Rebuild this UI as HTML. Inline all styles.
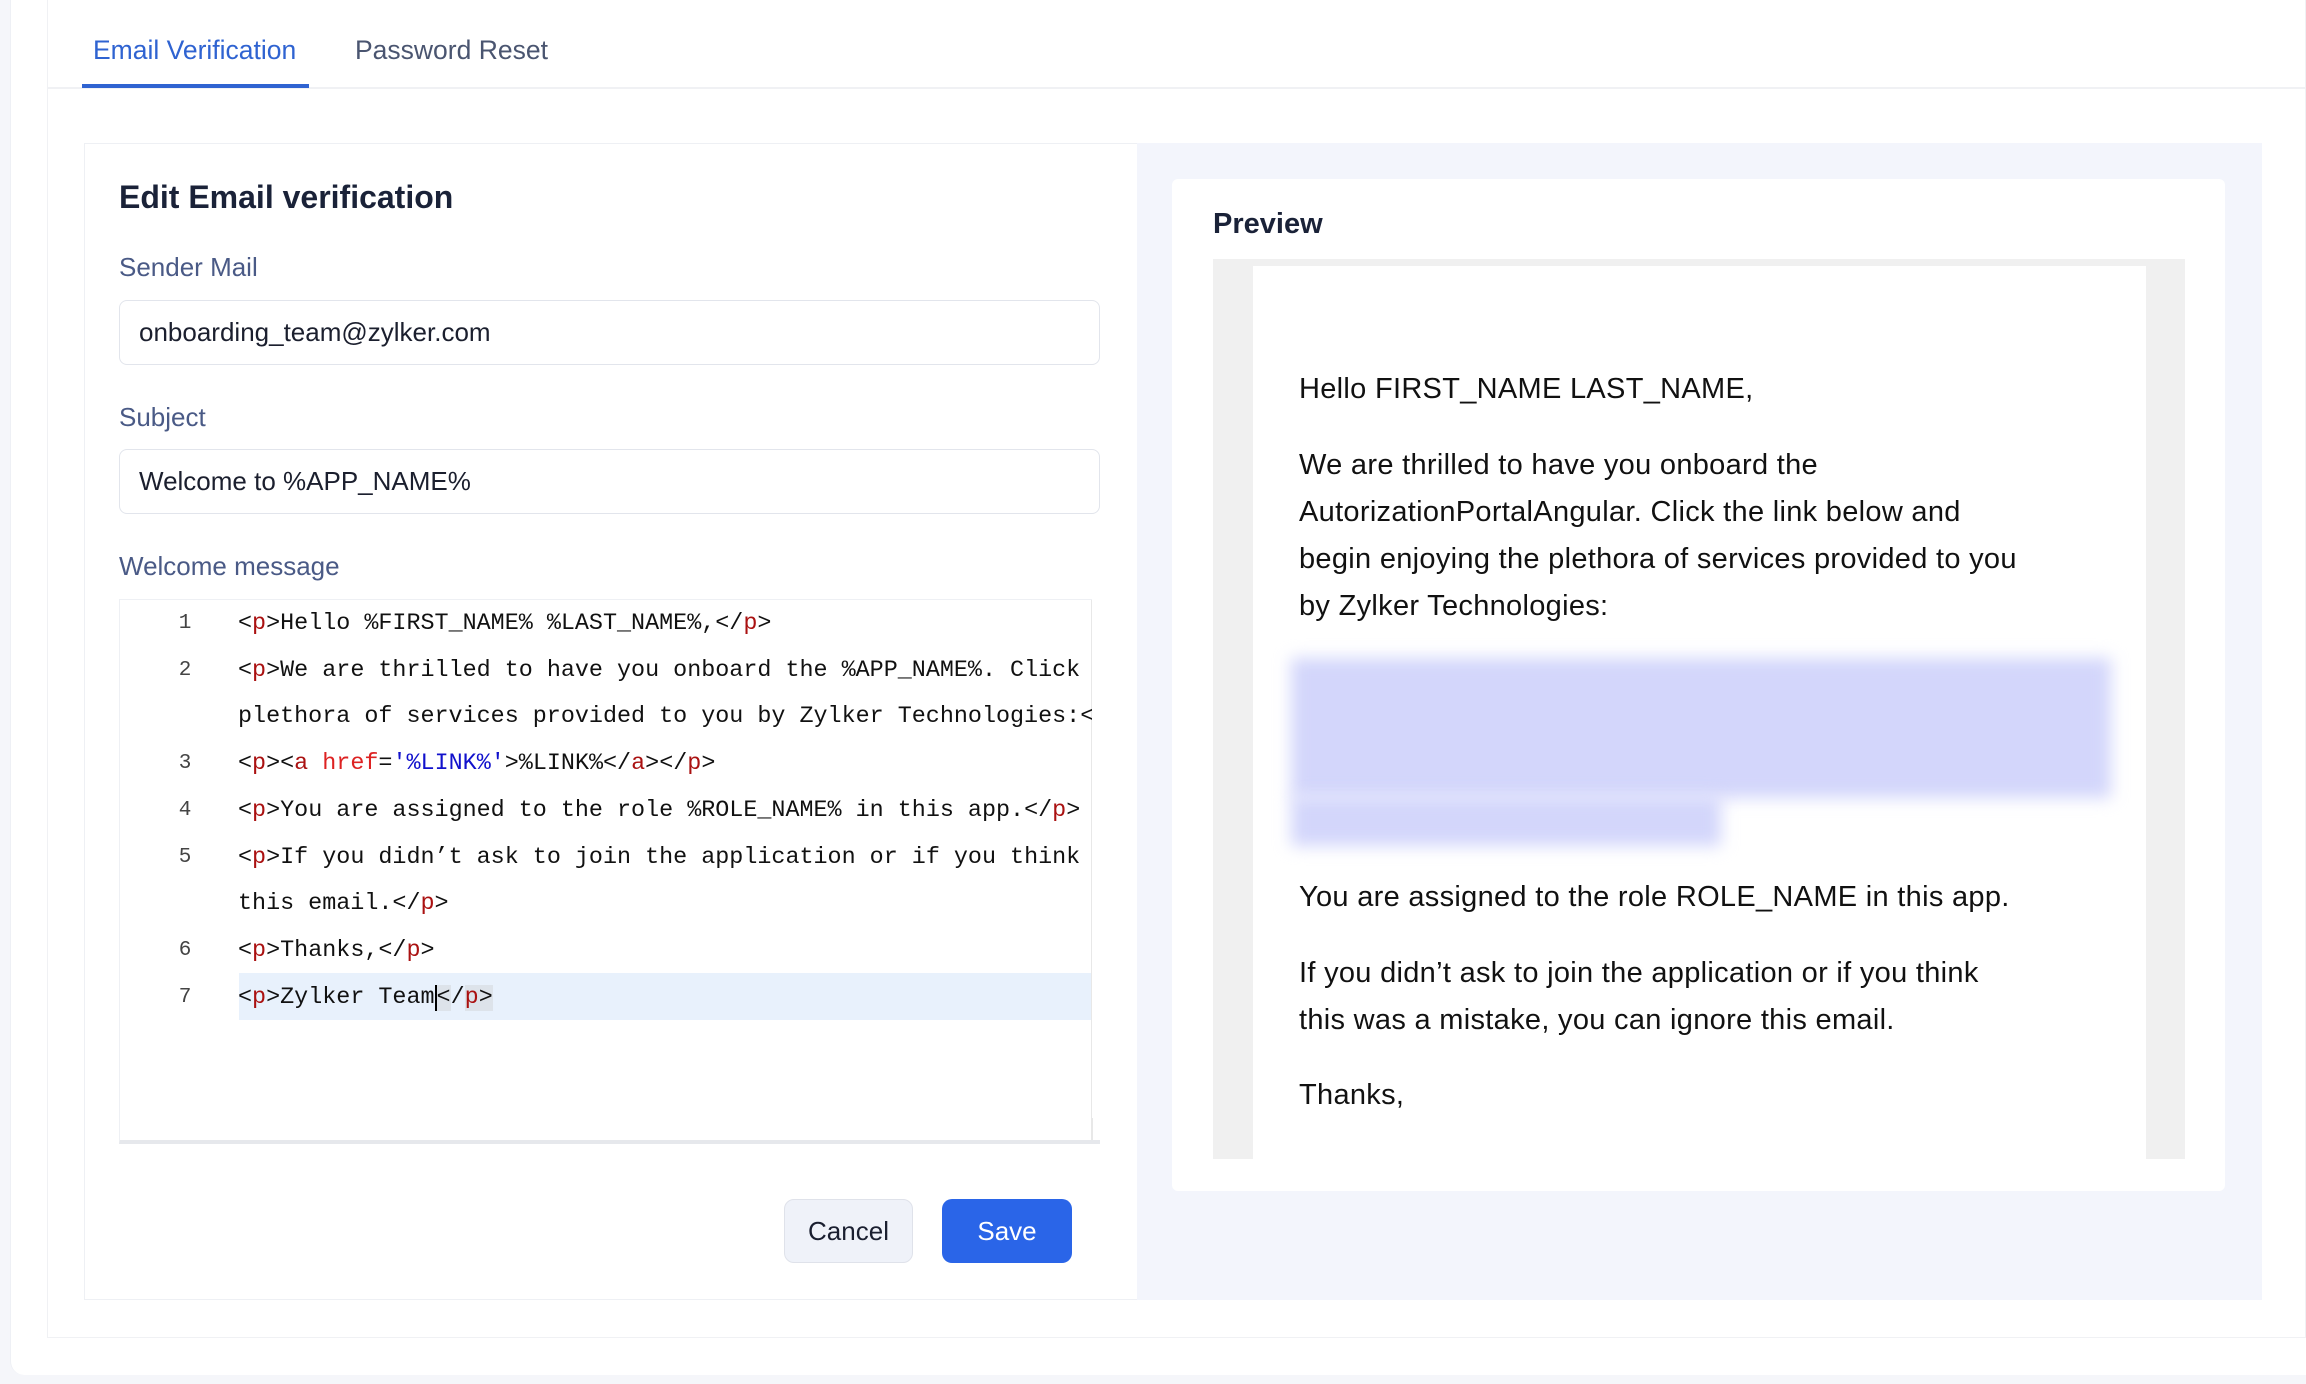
<!DOCTYPE html>
<html><head><meta charset="utf-8"><style>
*{box-sizing:border-box;margin:0;padding:0}
body{width:2306px;height:1384px;background:#f5f6fa;font-family:"Liberation Sans",sans-serif;position:relative;overflow:hidden}
.a{position:absolute}
.card{left:10px;top:0;width:2296px;height:1375px;background:#fff;border-radius:0 0 0 14px;border-left:1px solid #eef0f5}
.inner{left:47px;top:0;width:2259px;height:1338px;background:#fff;border:1px solid #f0f1f4;border-top:none}
.tab{top:36px;font-size:26.5px}
.lbl{left:119px;font-size:26px;color:#4a5a86}
.inp{left:119px;width:981px;height:65px;border:1.5px solid #e2e5ec;border-radius:8px;font-size:26px;color:#1b1f2e;padding-left:19px;line-height:62px}
.code{font-family:"Liberation Mono",monospace;font-size:23.4px;color:#111;white-space:pre;line-height:46.7px}
.ln{left:170px;width:30px;text-align:center;color:#444;font-family:"Liberation Mono",monospace;font-size:21px}
.t{color:#a11}
.pv{left:1299px;font-size:29px;color:#111;line-height:47px;letter-spacing:0.3px}
</style></head><body>
<div class="a card"></div>
<div class="a inner"></div>
<div class="a tab" style="left:93px;top:35px;color:#2f63d1">Email Verification</div>
<div class="a tab" style="left:355px;top:35px;color:#4a5570">Password Reset</div>
<div class="a" style="left:47px;top:87px;width:2259px;height:2px;background:#f0f1f4"></div>
<div class="a" style="left:82px;top:84px;width:227px;height:4px;background:#2f63d1"></div>

<div class="a" style="left:84px;top:143px;width:2178px;height:1157px;border:1px solid #eef0f4;background:#fff"></div>
<div class="a" style="left:1137px;top:143px;width:1125px;height:1157px;background:#f3f5fc"></div>

<div class="a" style="left:119px;top:179px;font-size:32px;font-weight:bold;color:#1a2238">Edit Email verification</div>
<div class="a lbl" style="top:252px">Sender Mail</div>
<div class="a inp" style="top:300px">onboarding_team@zylker.com</div>
<div class="a lbl" style="top:402px">Subject</div>
<div class="a inp" style="top:449px">Welcome to %APP_NAME%</div>
<div class="a lbl" style="top:551px">Welcome message</div>

<div class="a" style="left:119px;top:599px;width:981px;height:545px;border-top:1px solid #eef0f4;border-left:1px solid #eef0f4;border-bottom:4px solid #e6e8ec;overflow:hidden;background:#fff">
<div class="a" style="left:119px;top:373px;width:855px;height:47px;background:#e8f1fc"></div>
<div class="a" style="left:971px;top:0;width:2px;height:545px;background:#e8e8e8"></div>
<div class="a" style="left:972px;top:375px;width:3px;height:45px;background:#666"></div>
</div>
<div class="a code" style="left:238px;top:601px">&lt;<span class="t">p</span>&gt;Hello %FIRST_NAME% %LAST_NAME%,&lt;/<span class="t">p</span>&gt;
&lt;<span class="t">p</span>&gt;We are thrilled to have you onboard the %APP_NAME%. Click
plethora of services provided to you by Zylker Technologies:&lt;
&lt;<span class="t">p</span>&gt;&lt;<span class="t">a</span> <span style="color:#d22">href</span>=<span style="color:#11c">'%LINK%'</span>&gt;%LINK%&lt;/<span class="t">a</span>&gt;&lt;/<span class="t">p</span>&gt;
&lt;<span class="t">p</span>&gt;You are assigned to the role %ROLE_NAME% in this app.&lt;/<span class="t">p</span>&gt;
&lt;<span class="t">p</span>&gt;If you didn’t ask to join the application or if you think
this email.&lt;/<span class="t">p</span>&gt;
&lt;<span class="t">p</span>&gt;Thanks,&lt;/<span class="t">p</span>&gt;
&lt;<span class="t">p</span>&gt;Zylker Team<span style="border-left:2px solid #000;background:#dde3ea">&lt;</span>/<span class="t" style="background:#dde3ea">p</span><span style="background:#dde3ea">&gt;</span></div>
<div class="a" style="left:1092px;top:598px;width:8px;height:520px;background:#fff"></div>
<div class="a ln" style="top:601px;line-height:46.7px">1<br>2<br><br>3<br>4<br>5<br><br>6<br>7</div>

<div class="a" style="left:784px;top:1199px;width:129px;height:64px;background:#eff2f9;border:1px solid #dfe2ea;border-radius:10px;font-size:26px;color:#1a1f30;text-align:center;line-height:62px">Cancel</div>
<div class="a" style="left:942px;top:1199px;width:130px;height:64px;background:#2a65e8;border-radius:10px;font-size:26px;color:#fff;text-align:center;line-height:64px">Save</div>

<div class="a" style="left:1172px;top:179px;width:1053px;height:1012px;background:#fff;border-radius:6px"></div>
<div class="a" style="left:1213px;top:208px;font-size:29px;font-weight:bold;color:#1a2238">Preview</div>
<div class="a" style="left:1213px;top:259px;width:972px;height:900px;background:#f0f0f0"></div>
<div class="a" style="left:1253px;top:266px;width:893px;height:893px;background:#fff;overflow:hidden">
<div class="a" style="left:38px;top:392px;width:820px;height:140px;background:#d3d6fb;filter:blur(8px)"></div>
<div class="a" style="left:38px;top:530px;width:430px;height:50px;background:#d3d6fb;filter:blur(8px)"></div>
</div>
<div class="a pv" style="top:366px">Hello FIRST_NAME LAST_NAME,</div>
<div class="a pv" style="top:442px">We are thrilled to have you onboard the<br>AutorizationPortalAngular. Click the link below and<br>begin enjoying the plethora of services provided to you<br>by Zylker Technologies:</div>
<div class="a pv" style="top:874px">You are assigned to the role ROLE_NAME in this app.</div>
<div class="a pv" style="top:950px">If you didn’t ask to join the application or if you think<br>this was a mistake, you can ignore this email.</div>
<div class="a pv" style="top:1072px">Thanks,</div>
</body></html>
